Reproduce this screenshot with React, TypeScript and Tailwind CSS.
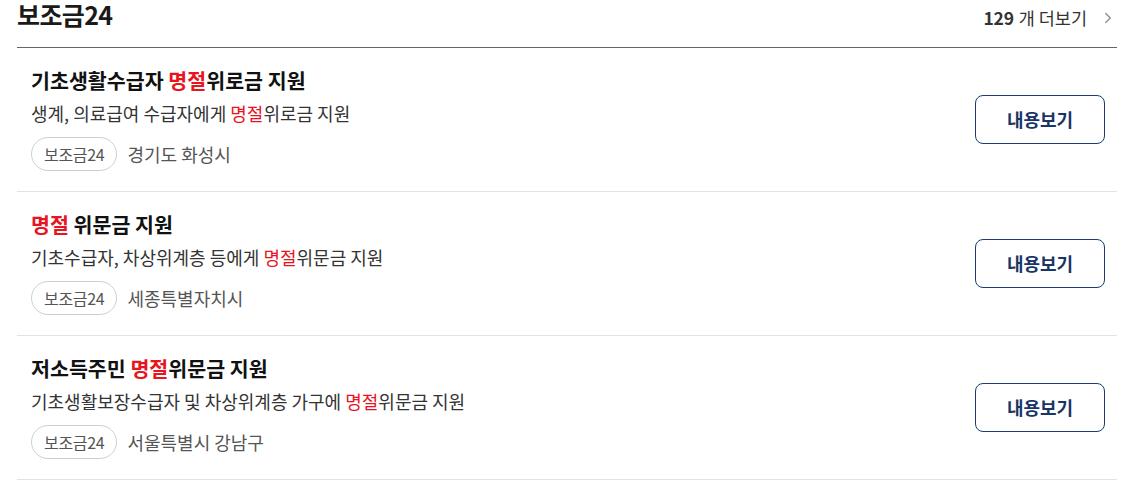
import { ChevronRight } from "lucide-react";

type Item = {
  title: React.ReactNode;
  desc: React.ReactNode;
  region: string;
};

const Hi = ({ children }: { children: React.ReactNode }) => (
  <span className="text-[#e8141e]">{children}</span>
);

const items: Item[] = [
  {
    title: (
      <>
        기초생활수급자 <Hi>명절</Hi>위로금 지원
      </>
    ),
    desc: (
      <>
        생계, 의료급여 수급자에게 <Hi>명절</Hi>위로금 지원
      </>
    ),
    region: "경기도 화성시",
  },
  {
    title: (
      <>
        <Hi>명절</Hi> 위문금 지원
      </>
    ),
    desc: (
      <>
        기초수급자, 차상위계층 등에게 <Hi>명절</Hi>위문금 지원
      </>
    ),
    region: "세종특별자치시",
  },
  {
    title: (
      <>
        저소득주민 <Hi>명절</Hi>위문금 지원
      </>
    ),
    desc: (
      <>
        기초생활보장수급자 및 차상위계층 가구에 <Hi>명절</Hi>위문금 지원
      </>
    ),
    region: "서울특별시 강남구",
  },
];

export default function App() {
  return (
    <div className="bg-white min-h-screen pl-[17px] pr-[7px] font-['Noto_Sans_CJK_KR','Noto_Sans',sans-serif]">
      {/* Header */}
      <div className="flex justify-between items-start h-[48px] border-b border-[#666]">
        <h2 className="text-[25px] leading-[28px] font-bold text-[#1a1a1a] tracking-[-0.6px]">보조금24</h2>
        <div className="flex items-center mt-[6px] text-[17.5px] leading-[24px] text-[#333]">
          <span className="font-bold tracking-[-0.3px]">129</span>
          <span className="ml-[5px]">개 더보기</span>
          <ChevronRight size={18} strokeWidth={1.6} className="ml-[12px] text-[#888]" />
        </div>
      </div>

      {/* List */}
      <div>
        {items.map((it) => (
          <div
            key={it.region}
            className="flex items-center justify-between border-b border-[#e3e3e3] pl-[14px] pr-[12px] pt-[19px] pb-[20px]"
          >
            <div>
              <p className="text-[20.6px] leading-[26px] font-bold text-[#111]">{it.title}</p>
              <p className="mt-[8px] text-[18px] leading-[24px] text-[#333]">{it.desc}</p>
              <div className="mt-[12px] flex items-center gap-[10px]">
                <span className="h-[34px] px-[12px] flex items-center rounded-full border border-[#cfcfcf] text-[16px] text-[#555] tracking-[-0.3px]">
                  보조금24
                </span>
                <span className="text-[18px] text-[#555]">{it.region}</span>
              </div>
            </div>
            <button className="w-[130px] h-[49px] rounded-[8px] border border-[#1c3b72] text-[#1a3466] text-[18px] font-bold">
              내용보기
            </button>
          </div>
        ))}
      </div>
    </div>
  );
}
